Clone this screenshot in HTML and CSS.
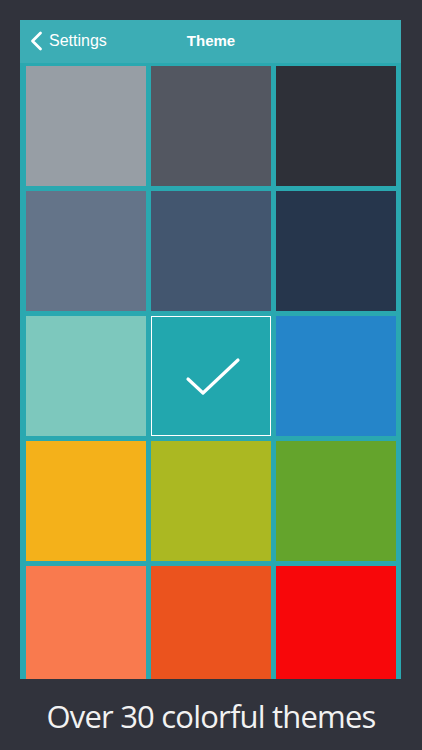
FILE: index.html
```html
<!DOCTYPE html>
<html>
<head>
<meta charset="utf-8">
<link rel="stylesheet" href="styles.css">
</head>
<body>
<div class="screen">
  <div class="phone">
    <div class="navbar">
      <div class="back">
        <svg class="chev" width="14" height="20" viewBox="0 0 14 20"><path d="M10.5 2 L2.5 10 L10.5 18" fill="none" stroke="#fff" stroke-width="2.8" stroke-linecap="round" stroke-linejoin="round"/></svg>
        <span class="back-label">Settings</span>
      </div>
      <div class="title">Theme</div>
    </div>
    <div class="grid">
      <div class="tile t1"></div>
      <div class="tile t2"></div>
      <div class="tile t3"></div>
      <div class="tile t4"></div>
      <div class="tile t5"></div>
      <div class="tile t6"></div>
      <div class="tile t7"></div>
      <div class="tile t8 selected">
        <svg width="120" height="120" viewBox="0 0 120 120"><path d="M37 63 L52 77 L87 44" fill="none" stroke="#fff" stroke-width="3.2" stroke-linecap="round" stroke-linejoin="round"/></svg>
      </div>
      <div class="tile t9"></div>
      <div class="tile t10"></div>
      <div class="tile t11"></div>
      <div class="tile t12"></div>
      <div class="tile t13"></div>
      <div class="tile t14"></div>
      <div class="tile t15"></div>
    </div>
  </div>
  <div class="caption">Over 30 colorful themes</div>
</div>
</body>
</html>
```
FILE: styles.css
```css
html, body {
  margin: 0;
  padding: 0;
  background: #31333c;
}
.screen {
  width: 422px;
  height: 750px;
  overflow: hidden;
  display: flex;
  flex-direction: column;
  align-items: flex-start;
}
.phone {
  margin: 20px 0 0 20px;
  width: 381px;
  height: 659px;
  background: #2aa8b0;
  overflow: hidden;
  display: flex;
  flex-direction: column;
}
.navbar {
  height: 43px;
  flex: none;
  background: #3cadb5;
  position: relative;
  display: flex;
  align-items: center;
  justify-content: center;
  font-family: "Liberation Sans", Arial, sans-serif;
  color: #fff;
}
.back {
  position: absolute;
  left: 10px;
  top: 0;
  height: 43px;
  display: flex;
  align-items: center;
}
.chev {
  display: block;
  margin-top: -1px;
}
.back-label {
  font-size: 16px;
  margin-left: 5px;
  margin-top: -2px;
}
.title {
  font-size: 15px;
  font-weight: bold;
  margin-top: -2px;
  margin-left: 1px;
}
.grid {
  padding: 3px 5px 0 6px;
  display: grid;
  grid-template-columns: repeat(3, 120px);
  grid-auto-rows: 120px;
  gap: 5px;
}
.tile {
  box-sizing: border-box;
}
.selected {
  border: 1px solid #ffffff;
}
.selected svg {
  display: block;
  margin: -1px;
}
.t1 { background: #979ea5; }
.t2 { background: #535761; }
.t3 { background: #2e3038; }
.t4 { background: #647489; }
.t5 { background: #43566f; }
.t6 { background: #26364c; }
.t7 { background: #7dc8bd; }
.t8 { background: #22a7ae; }
.t9 { background: #2585c9; }
.t10 { background: #f4b11a; }
.t11 { background: #abb822; }
.t12 { background: #64a42c; }
.t13 { background: #f97a4e; }
.t14 { background: #eb531e; }
.t15 { background: #f8070a; }
.caption {
  width: 422px;
  text-align: center;
  margin-top: 16px;
  font-family: "Open Sans", "Noto Sans", sans-serif;
  font-size: 31px;
  color: #f2f2f2;
  letter-spacing: -0.8px;
}
```
